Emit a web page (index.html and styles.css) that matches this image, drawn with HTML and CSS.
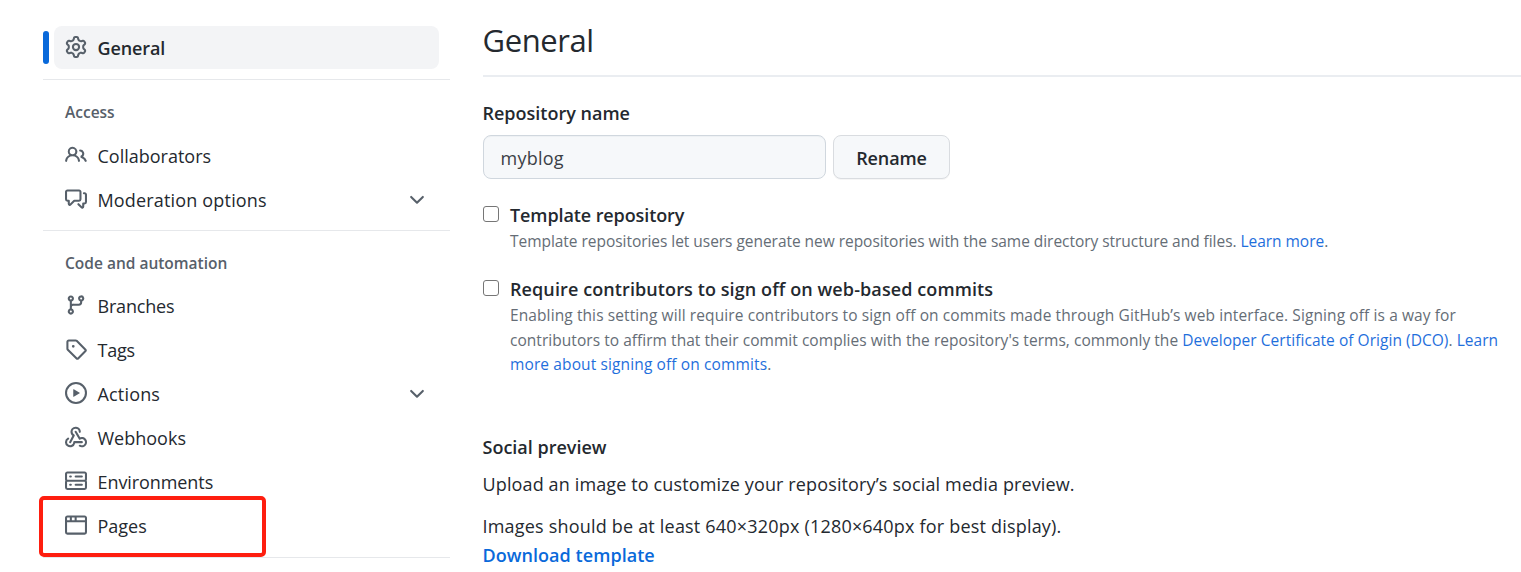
FILE: index.html
```html
<!DOCTYPE html>
<html lang="en">
<head>
<meta charset="utf-8">
<title>General settings</title>
<link rel="stylesheet" href="styles.css">
</head>
<body>
<div class="page">
  <nav class="sidebar">
    <a class="item item-current">
      <svg class="icon" viewBox="0 0 16 16"><path d="M8 0a8.2 8.2 0 0 1 .701.031C9.444.095 9.99.645 10.16 1.29l.288 1.107c.018.066.079.158.212.224.231.114.454.243.668.386.123.082.233.09.299.071l1.103-.303c.644-.176 1.392.021 1.82.63.27.385.506.792.704 1.218.315.675.111 1.422-.364 1.891l-.814.806c-.049.048-.098.147-.088.294.016.257.016.515 0 .772-.01.147.038.246.088.294l.814.806c.475.469.679 1.216.364 1.891a7.977 7.977 0 0 1-.704 1.217c-.428.61-1.176.807-1.82.63l-1.102-.302c-.067-.019-.177-.011-.3.071a5.909 5.909 0 0 1-.668.386c-.133.066-.194.158-.211.224l-.29 1.106c-.168.646-.715 1.196-1.458 1.26a8.006 8.006 0 0 1-1.402 0c-.743-.064-1.289-.614-1.458-1.26l-.289-1.106c-.018-.066-.079-.158-.212-.224a5.738 5.738 0 0 1-.668-.386c-.123-.082-.233-.09-.299-.071l-1.103.303c-.644.176-1.392-.021-1.82-.63a8.12 8.12 0 0 1-.704-1.218c-.315-.675-.111-1.422.363-1.891l.815-.806c.05-.048.098-.147.088-.294a6.214 6.214 0 0 1 0-.772c.01-.147-.038-.246-.088-.294l-.815-.806C.635 6.045.431 5.298.746 4.623a7.92 7.92 0 0 1 .704-1.217c.428-.61 1.176-.807 1.82-.63l1.102.302c.067.019.177.011.3-.071.214-.143.437-.272.668-.386.133-.066.194-.158.211-.224l.29-1.106C6.009.645 6.556.095 7.299.03 7.53.01 7.764 0 8 0Zm-.571 1.525c-.036.003-.108.036-.137.146l-.289 1.105c-.147.561-.549.967-.998 1.189-.173.086-.34.183-.5.29-.417.278-.97.423-1.529.27l-1.103-.303c-.109-.03-.175.016-.195.045-.22.312-.412.644-.573.99-.014.031-.021.11.059.19l.815.806c.411.406.562.957.53 1.456a4.709 4.709 0 0 0 0 .582c.032.499-.119 1.05-.53 1.456l-.815.806c-.081.08-.073.159-.059.19.162.346.353.677.573.989.02.03.085.076.195.046l1.102-.303c.56-.153 1.113-.008 1.53.27.161.107.328.204.501.29.447.222.85.629.997 1.189l.289 1.105c.029.109.101.143.137.146a6.6 6.6 0 0 0 1.142 0c.036-.003.108-.036.137-.146l.289-1.105c.147-.561.549-.967.998-1.189.173-.086.34-.183.5-.29.417-.278.97-.423 1.529-.27l1.103.303c.109.029.175-.016.195-.045.22-.313.411-.644.573-.99.014-.031.021-.11-.059-.19l-.815-.806c-.411-.406-.562-.957-.53-1.456a4.709 4.709 0 0 0 0-.582c-.032-.499.119-1.05.53-1.456l.815-.806c.081-.08.073-.159.059-.19a6.464 6.464 0 0 0-.573-.989c-.02-.03-.085-.076-.195-.046l-1.102.303c-.56.153-1.113.008-1.53-.27a4.44 4.44 0 0 0-.501-.29c-.447-.222-.85-.629-.997-1.189l-.289-1.105c-.029-.11-.101-.143-.137-.146a6.6 6.6 0 0 0-1.142 0ZM11 8a3 3 0 1 1-6 0 3 3 0 0 1 6 0ZM9.5 8a1.5 1.5 0 1 0-3.001.001A1.5 1.5 0 0 0 9.5 8Z"/></svg>
      <span class="label">General</span>
    </a>
    <section class="group">
      <h3 class="group-title">Access</h3>
      <a class="item">
        <svg class="icon" viewBox="0 0 16 16"><path d="M2 5.5a3.5 3.5 0 1 1 5.898 2.549 5.508 5.508 0 0 1 3.034 4.084.75.75 0 1 1-1.482.235 4 4 0 0 0-7.9 0 .75.75 0 0 1-1.482-.236A5.507 5.507 0 0 1 3.102 8.05 3.493 3.493 0 0 1 2 5.5ZM11 4a3.001 3.001 0 0 1 2.22 5.018 5.01 5.01 0 0 1 2.56 3.012.749.749 0 0 1-.885.954.752.752 0 0 1-.549-.514 3.507 3.507 0 0 0-2.522-2.372.75.75 0 0 1-.574-.73v-.352a.75.75 0 0 1 .416-.672A1.5 1.5 0 0 0 11 5.5.75.75 0 0 1 11 4Zm-5.5-.5a2 2 0 1 0-.001 3.999A2 2 0 0 0 5.5 3.5Z"/></svg>
        <span class="label">Collaborators</span>
      </a>
      <a class="item">
        <svg class="icon" viewBox="0 0 16 16"><path d="M1.75 1h8.5c.966 0 1.75.784 1.75 1.75v5.5A1.75 1.75 0 0 1 10.25 10H7.061l-2.574 2.573A1.458 1.458 0 0 1 2 11.543V10h-.25A1.75 1.75 0 0 1 0 8.25v-5.5C0 1.784.784 1 1.75 1ZM1.5 2.75v5.5c0 .138.112.25.25.25h1a.75.75 0 0 1 .75.75v2.19l2.72-2.72a.749.749 0 0 1 .53-.22h3.5a.25.25 0 0 0 .25-.25v-5.5a.25.25 0 0 0-.25-.25h-8.5a.25.25 0 0 0-.25.25Zm13 2a.25.25 0 0 0-.25-.25h-.5a.75.75 0 0 1 0-1.5h.5c.966 0 1.75.784 1.75 1.75v5.5A1.75 1.75 0 0 1 14.25 12H14v1.543a1.458 1.458 0 0 1-2.487 1.03L9.22 12.28a.749.749 0 0 1 .326-1.275.749.749 0 0 1 .734.215l2.22 2.22v-2.19a.75.75 0 0 1 .75-.75h1a.25.25 0 0 0 .25-.25Z"/></svg>
        <span class="label label-wide">Moderation options</span>
        <svg class="icon chevron" viewBox="0 0 16 16"><path d="M12.78 5.22a.749.749 0 0 1 0 1.06l-4.25 4.25a.749.749 0 0 1-1.06 0L3.22 6.28a.749.749 0 1 1 1.06-1.06L8 8.939l3.72-3.719a.749.749 0 0 1 1.06 0Z"/></svg>
      </a>
    </section>
    <section class="group group-last">
      <h3 class="group-title">Code and automation</h3>
      <a class="item">
        <svg class="icon" viewBox="0 0 16 16"><path d="M9.5 3.25a2.25 2.25 0 1 1 3 2.122V6A2.5 2.5 0 0 1 10 8.5H6a1 1 0 0 0-1 1v1.128a2.251 2.251 0 1 1-1.5 0V5.372a2.25 2.25 0 1 1 1.5 0v1.836A2.493 2.493 0 0 1 6 7h4a1 1 0 0 0 1-1v-.628A2.25 2.25 0 0 1 9.5 3.25Zm-6 0a.75.75 0 1 0 1.5 0 .75.75 0 0 0-1.5 0Zm8.25-.75a.75.75 0 1 0 0 1.5.75.75 0 0 0 0-1.5ZM4.25 12a.75.75 0 1 0 0 1.5.75.75 0 0 0 0-1.5Z"/></svg>
        <span class="label label-tight">Branches</span>
      </a>
      <a class="item">
        <svg class="icon" viewBox="0 0 16 16"><path d="M1 7.775V2.75C1 1.784 1.784 1 2.75 1h5.025c.464 0 .91.184 1.238.513l6.25 6.25a1.75 1.75 0 0 1 0 2.474l-5.026 5.026a1.75 1.75 0 0 1-2.474 0l-6.25-6.25A1.752 1.752 0 0 1 1 7.775Zm1.5 0c0 .066.026.13.073.177l6.25 6.25a.25.25 0 0 0 .354 0l5.025-5.025a.25.25 0 0 0 0-.354l-6.25-6.25a.25.25 0 0 0-.177-.073H2.75a.25.25 0 0 0-.25.25ZM6 5a1 1 0 1 1 0 2 1 1 0 0 1 0-2Z"/></svg>
        <span class="label label-tight">Tags</span>
      </a>
      <a class="item">
        <svg class="icon" viewBox="0 0 16 16"><path d="M8 0a8 8 0 1 1 0 16A8 8 0 0 1 8 0ZM1.5 8a6.5 6.5 0 1 0 13 0 6.5 6.5 0 0 0-13 0Zm4.879-2.773 4.264 2.559a.25.25 0 0 1 0 .428l-4.264 2.559A.25.25 0 0 1 6 10.559V5.442a.25.25 0 0 1 .379-.215Z"/></svg>
        <span class="label label-wide">Actions</span>
        <svg class="icon chevron" viewBox="0 0 16 16"><path d="M12.78 5.22a.749.749 0 0 1 0 1.06l-4.25 4.25a.749.749 0 0 1-1.06 0L3.22 6.28a.749.749 0 1 1 1.06-1.06L8 8.939l3.72-3.719a.749.749 0 0 1 1.06 0Z"/></svg>
      </a>
      <a class="item">
        <svg class="icon" viewBox="0 0 16 16"><path d="M5.5 4.25a2.25 2.25 0 0 1 4.5 0 .75.75 0 0 0 1.5 0 3.75 3.75 0 1 0-6.14 2.889l-2.272 4.258a.75.75 0 0 0 1.324.706L7 7.25a.75.75 0 0 0-.309-1.015A2.25 2.25 0 0 1 5.5 4.25Z"/><path d="M7.364 3.607a.75.75 0 0 1 1.03.257l2.608 4.349a3.75 3.75 0 1 1-.628 6.785.75.75 0 0 1 .752-1.299 2.25 2.25 0 1 0-.033-3.88.75.75 0 0 1-1.03-.256L7.107 4.636a.75.75 0 0 1 .257-1.03Z"/><path d="M2.9 8.776A.75.75 0 0 1 2.625 9.8 2.25 2.25 0 1 0 6 11.75a.75.75 0 0 1 .75-.751h5.5a.75.75 0 0 1 0 1.5H7.425a3.751 3.751 0 1 1-5.55-3.998.75.75 0 0 1 1.024.274Z"/></svg>
        <span class="label">Webhooks</span>
      </a>
      <a class="item">
        <svg class="icon" viewBox="0 0 16 16"><path d="M1.75 1h12.5c.966 0 1.75.784 1.75 1.75v4c0 .372-.116.717-.314 1 .198.283.314.628.314 1v4a1.75 1.75 0 0 1-1.75 1.75H1.75A1.75 1.75 0 0 1 0 12.75v-4c0-.358.109-.707.314-1a1.739 1.739 0 0 1-.314-1v-4C0 1.784.784 1 1.75 1ZM1.5 2.75v4c0 .138.112.25.25.25h12.5a.25.25 0 0 0 .25-.25v-4a.25.25 0 0 0-.25-.25H1.75a.25.25 0 0 0-.25.25Zm.25 5.75a.25.25 0 0 0-.25.25v4c0 .138.112.25.25.25h12.5a.25.25 0 0 0 .25-.25v-4a.25.25 0 0 0-.25-.25ZM7 4.75A.75.75 0 0 1 7.75 4h4.5a.75.75 0 0 1 0 1.5h-4.5A.75.75 0 0 1 7 4.75ZM7.75 10h4.5a.75.75 0 0 1 0 1.5h-4.5a.75.75 0 0 1 0-1.5ZM3 4.75A.75.75 0 0 1 3.75 4h.5a.75.75 0 0 1 0 1.5h-.5A.75.75 0 0 1 3 4.75ZM3.75 10h.5a.75.75 0 0 1 0 1.5h-.5a.75.75 0 0 1 0-1.5Z"/></svg>
        <span class="label label-env">Environments</span>
      </a>
      <a class="item item-marked">
        <svg class="icon" viewBox="0 0 16 16"><path d="M0 2.75C0 1.784.784 1 1.75 1h12.5c.966 0 1.75.784 1.75 1.75v10.5A1.75 1.75 0 0 1 14.25 15H1.75A1.75 1.75 0 0 1 0 13.25ZM14.5 6h-13v7.25c0 .138.112.25.25.25h12.5a.25.25 0 0 0 .25-.25Zm-6-3.5v2h6V2.75a.25.25 0 0 0-.25-.25ZM5 2.5v2h2v-2Zm-3.5 2h2v-2H1.75a.25.25 0 0 0-.25.25Z"/></svg>
        <span class="label">Pages</span>
      </a>
    </section>
    <div class="end-rule"></div>
  </nav>
  <main class="content">
    <h1 class="title"><span class="t-title">General</span></h1>
    <label class="field-label" for="name">Repository name</label>
    <div class="rename-row">
      <input class="input" id="name" type="text" value="myblog">
      <button class="button" type="button">Rename</button>
    </div>
    <div class="option">
      <input class="checkbox" type="checkbox" aria-label="Template repository">
      <div class="option-body">
        <div class="option-title"><span class="t-template">Template repository</span></div>
        <p class="note"><span class="n1">Template repositories let users generate new repositories with the same directory structure and files. <a class="link">Learn more</a>.</span></p>
      </div>
    </div>
    <div class="option option-signoff">
      <input class="checkbox" type="checkbox" aria-label="Require sign off">
      <div class="option-body">
        <div class="option-title"><span class="t-require">Require contributors to sign off on web-based commits</span></div>
        <p class="note"><span class="n2">Enabling this setting will require contributors to sign off on commits made through GitHub’s web interface. Signing off is a way for</span><br><span class="n3">contributors to affirm that their commit complies with the repository's terms, commonly the <a class="link">Developer Certificate of Origin (DCO)</a>. <a class="link">Learn</a></span><br><span class="n4"><a class="link">more about signing off on commits</a>.</span></p>
      </div>
    </div>
    <section class="social">
      <h2 class="social-title">Social preview</h2>
      <p class="text"><span class="p1">Upload an image to customize your repository’s social media preview.</span></p>
      <p class="text text-size"><span class="p2">Images should be at least 640×320px (1280×640px for best display).</span></p>
      <a class="download">Download template</a>
    </section>
  </main>
</div>
</body>
</html>
```
FILE: styles.css
```css
*, *::before, *::after { box-sizing: border-box; }
body {
  margin: 0;
  background: #fff;
  color: #24292f;
  font: 18px/30px "Open Sans", "Noto Sans", sans-serif;
}
.page {
  display: flex;
  width: 1521px;
  height: 572px;
  overflow: hidden;
}
.sidebar {
  flex: none;
  width: 450px;
  padding: 25.5px 0 0 43px;
}
.item {
  position: relative;
  display: flex;
  align-items: center;
  gap: 10.5px;
  height: 43.95px;
  margin: 0 11px;
  padding: 2px 11px 0;
}
.item-current {
  height: 43.5px;
  margin-bottom: 10px;
  border-radius: 8px;
  background: #f3f4f6;
  font-weight: 600;
}
.item-current::before {
  content: "";
  position: absolute;
  left: -11px;
  top: 5px;
  width: 5.5px;
  height: 33px;
  border-radius: 3px;
  background: #0969da;
}
.item-marked::after {
  content: "";
  position: absolute;
  left: -15.5px;
  top: -7px;
  width: 227.5px;
  height: 61px;
  border: 4.5px solid #fe1e0f;
  border-radius: 5px;
}
.icon {
  flex: none;
  width: 22px;
  height: 22px;
  margin-top: -2px;
  fill: #57606a;
}
.item-current .icon { margin-top: -3px; }
.chevron { margin: 0 0 0 auto; }
.label { white-space: nowrap; letter-spacing: 0; }
.label-wide { letter-spacing: 0.17px; }
.label-tight { letter-spacing: -0.2px; }
.label-env { letter-spacing: -0.08px; }
.item-current .label { letter-spacing: -0.1px; }
.group {
  height: 151px;
  border-top: 1px solid #e6e8eb;
  padding-top: 17px;
}
.group-last { height: 327px; padding-top: 16.5px; }
.group-title {
  height: 36px;
  margin: 0;
  padding-left: 22px;
  font-size: 15.5px;
  line-height: 30px;
  font-weight: 600;
  color: #57606a;
}
.end-rule { border-top: 1px solid #e6e8eb; }
.content {
  width: 1038.5px;
  margin-left: 32.5px;
  flex: none;
}
.content span { white-space: nowrap; }
.title {
  height: 76.5px;
  margin: 0;
  padding-top: 18px;
  border-bottom: 2px solid #eaedf1;
  font-size: 31px;
  line-height: 44px;
  font-weight: 400;
}
.t-title { letter-spacing: -0.4px; }
.field-label {
  display: block;
  margin-top: 21.5px;
  font-weight: 600;
}
.rename-row { display: flex; gap: 7px; margin-top: 7px; }
.input {
  width: 343.5px;
  height: 44px;
  padding: 2px 17px 0;
  border: 1px solid #d0d7de;
  border-radius: 8px;
  background: #f6f8fa;
  box-shadow: inset 0 1px 0 rgba(208, 215, 222, .2);
  color: #3b4046;
  font: inherit;
  letter-spacing: 0.25px;
}
.button {
  width: 117px;
  height: 44px;
  padding: 2px 0 0;
  border: 1px solid #d9dce0;
  border-radius: 8px;
  background: #f6f8fa;
  box-shadow: 0 1px 0 rgba(27, 31, 36, .04);
  color: #24292f;
  font: inherit;
  font-weight: 600;
  letter-spacing: -0.1px;
}
.option {
  display: flex;
  gap: 11px;
  height: 74px;
  margin-top: 21px;
}
.option-signoff { height: 137px; margin-top: 0; }
.checkbox {
  appearance: none;
  flex: none;
  width: 16.5px;
  height: 16.5px;
  margin: 5.5px 0 0;
  border: 1.5px solid #767676;
  border-radius: 3px;
  background: #fff;
}
.option-title { font-weight: 600; }
.t-template { letter-spacing: -0.1px; }
.t-require { letter-spacing: 0.1px; }
.note {
  margin: -1px 0 0;
  color: #656d76;
  font-size: 15.5px;
  line-height: 24.7px;
}
.n1 { letter-spacing: -0.04px; }
.n2 { letter-spacing: 0.1px; }
.n3 { letter-spacing: 0.04px; }
.n4 { letter-spacing: 0.12px; }
.link { color: #1f6fdc; }
.social { padding-top: 21px; }
.social-title { margin: 0; font-size: 18px; line-height: 30px; font-weight: 600; }
.text { margin: 7px 0 0; }
.text-size { margin-top: 12px; }
.p1 { letter-spacing: 0.13px; }
.p2 { letter-spacing: 0.195px; }
.download { display: block; margin-top: -1px; color: #0969da; font-weight: 600; letter-spacing: 0.05px; }
```
